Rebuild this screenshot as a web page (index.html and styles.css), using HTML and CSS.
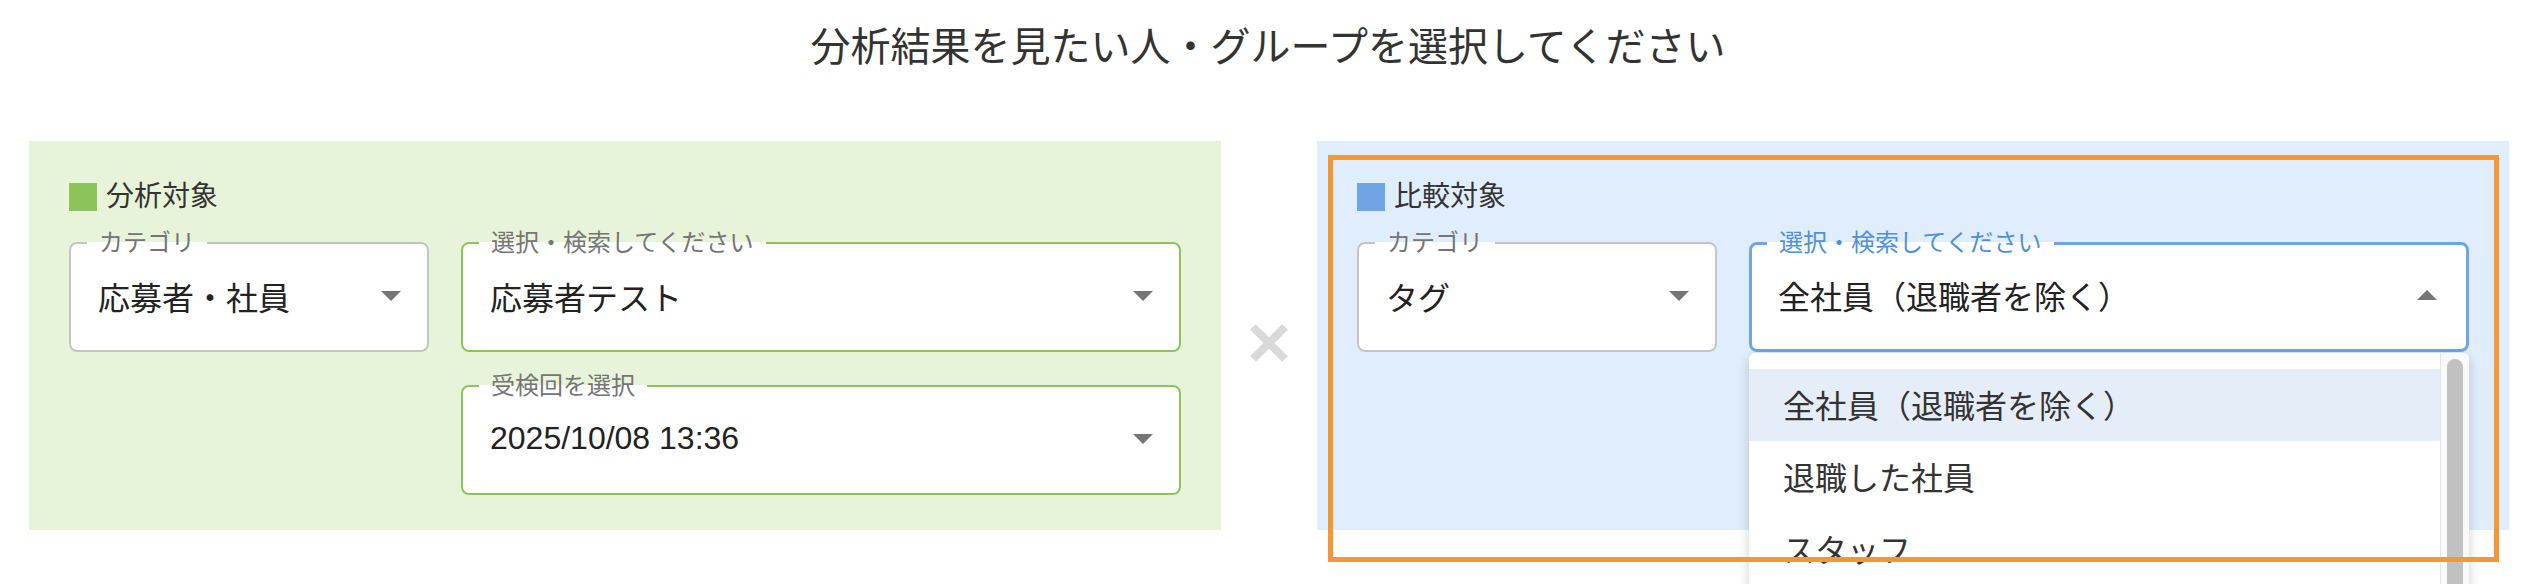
FILE: index.html
```html
<!DOCTYPE html>
<html lang="ja">
<head>
<meta charset="utf-8">
<title>分析対象の選択</title>
<link rel="stylesheet" href="styles.css">
</head>
<body>
<h1 class="title">分析結果を見たい人・グループを選択してください</h1>
<div class="compare">
  <section class="panel panel-target">
    <div class="panel-head"><span class="swatch swatch-green"></span>分析対象</div>
    <div class="fields">
      <fieldset class="select">
        <legend>カテゴリ</legend>
        <div class="value"><span class="text">応募者・社員</span><span class="caret"></span></div>
      </fieldset>
      <fieldset class="select select-green">
        <legend>選択・検索してください</legend>
        <div class="value"><span class="text">応募者テスト</span><span class="caret"></span></div>
      </fieldset>
      <fieldset class="select select-green field-date">
        <legend>受検回を選択</legend>
        <div class="value"><span class="text">2025/10/08 13:36</span><span class="caret"></span></div>
      </fieldset>
    </div>
  </section>
  <div class="times">
    <svg width="38" height="38" viewBox="0 0 38 38"><path d="M3 3L35 35M35 3L3 35" stroke="#d9d9d9" stroke-width="8" fill="none"/></svg>
  </div>
  <section class="panel panel-compare">
    <div class="panel-head"><span class="swatch swatch-blue"></span>比較対象</div>
    <div class="fields">
      <fieldset class="select">
        <legend>カテゴリ</legend>
        <div class="value"><span class="text">タグ</span><span class="caret"></span></div>
      </fieldset>
      <div class="search-wrap">
        <fieldset class="select select-focused">
          <legend>選択・検索してください</legend>
          <div class="value"><span class="text">全社員（退職者を除く）</span><span class="caret caret-up"></span></div>
        </fieldset>
        <div class="dropdown">
          <ul class="options">
            <li class="option option-active">全社員（退職者を除く）</li>
            <li class="option">退職した社員</li>
            <li class="option">スタッフ</li>
          </ul>
          <div class="scrollbar"><div class="thumb"></div></div>
        </div>
      </div>
    </div>
    <div class="highlight"></div>
  </section>
</div>
</body>
</html>
```
FILE: styles.css
```css
html, body {
  margin: 0;
  padding: 0;
  background: #fff;
  overflow: hidden;
  height: 584px;
}
body {
  font-family: "Liberation Sans", "Noto Sans CJK JP", sans-serif;
  color: #333;
}
.title {
  margin: 0;
  padding-top: 27px;
  font-size: 40px;
  line-height: 40px;
  font-weight: 400;
  text-align: center;
  color: #333;
}
.compare {
  display: flex;
  margin-top: 74px;
  padding-left: 29px;
}
.panel {
  position: relative;
  width: 1192px;
  box-sizing: border-box;
  padding: 42px 40px 35px;
}
.panel-target { background: #e7f4d9; }
.panel-compare { background: #e0edfc; }
.panel-head {
  display: flex;
  align-items: center;
  gap: 9px;
  font-size: 28px;
  line-height: 28px;
  color: #333;
  margin-bottom: 20px;
}
.swatch {
  width: 28px;
  height: 28px;
  flex: none;
}
.swatch-green { background: #8cc35a; }
.swatch-blue { background: #6fa5e4; }
.fields {
  display: grid;
  grid-template-columns: 360px 720px;
  column-gap: 32px;
  row-gap: 22px;
  align-items: start;
}
.field-date { grid-column: 2; }
.select {
  margin: 0;
  padding: 0;
  min-width: 0;
  border: 2px solid #c4c4c4;
  border-radius: 8px;
  background: #fff;
}
.select legend {
  margin-left: 16px;
  padding: 0 12px;
  font-size: 24px;
  line-height: 24px;
  color: #757575;
}
.select-green { border-color: #8cc35a; }
.select-focused { border: 3px solid #6fa5e4; }
.select-focused legend { margin-left: 15px; color: #4f8fdc; }
.value {
  display: flex;
  align-items: center;
  justify-content: space-between;
  height: 81px;
  padding: 0 26px 14px 27px;
  font-size: 32px;
  color: #222;
}
.select-focused .value { height: 80px; padding-left: 26px; padding-right: 29px; }
.caret {
  width: 0;
  height: 0;
  border-left: 10px solid transparent;
  border-right: 10px solid transparent;
  border-top: 10px solid #757575;
}
.caret-up {
  border-top: 0;
  border-bottom: 10px solid #757575;
}
.times {
  width: 96px;
  display: flex;
  justify-content: center;
  align-items: center;
  padding-top: 14px;
}
.search-wrap { position: relative; }
.dropdown {
  position: absolute;
  top: calc(100% + 1px);
  left: 0;
  right: 0;
  height: 250px;
  display: flex;
  background: #fff;
  border-radius: 6px 6px 0 0;
  box-shadow: 0 4px 12px rgba(0, 0, 0, 0.18);
  overflow: hidden;
  z-index: 2;
}
.options {
  flex: 1;
  list-style: none;
  margin: 0;
  padding: 16px 0 0;
}
.option {
  height: 69px;
  display: flex;
  align-items: center;
  padding: 0 0 3px 34px;
  font-size: 32px;
  color: #333;
}
.option-active { background: #e5edf8; }
.scrollbar {
  width: 28px;
  flex: none;
  background: #f9f9f9;
  border-left: 1px solid #e6e6e6;
}
.thumb {
  width: 16px;
  height: 400px;
  margin: 6px auto 0;
  border-radius: 8px;
  background: #c1c1c1;
}
.highlight {
  position: absolute;
  left: 11px;
  right: 10px;
  top: 14px;
  height: 407px;
  box-sizing: border-box;
  border: 5px solid #f99633;
  pointer-events: none;
  z-index: 3;
}
```
